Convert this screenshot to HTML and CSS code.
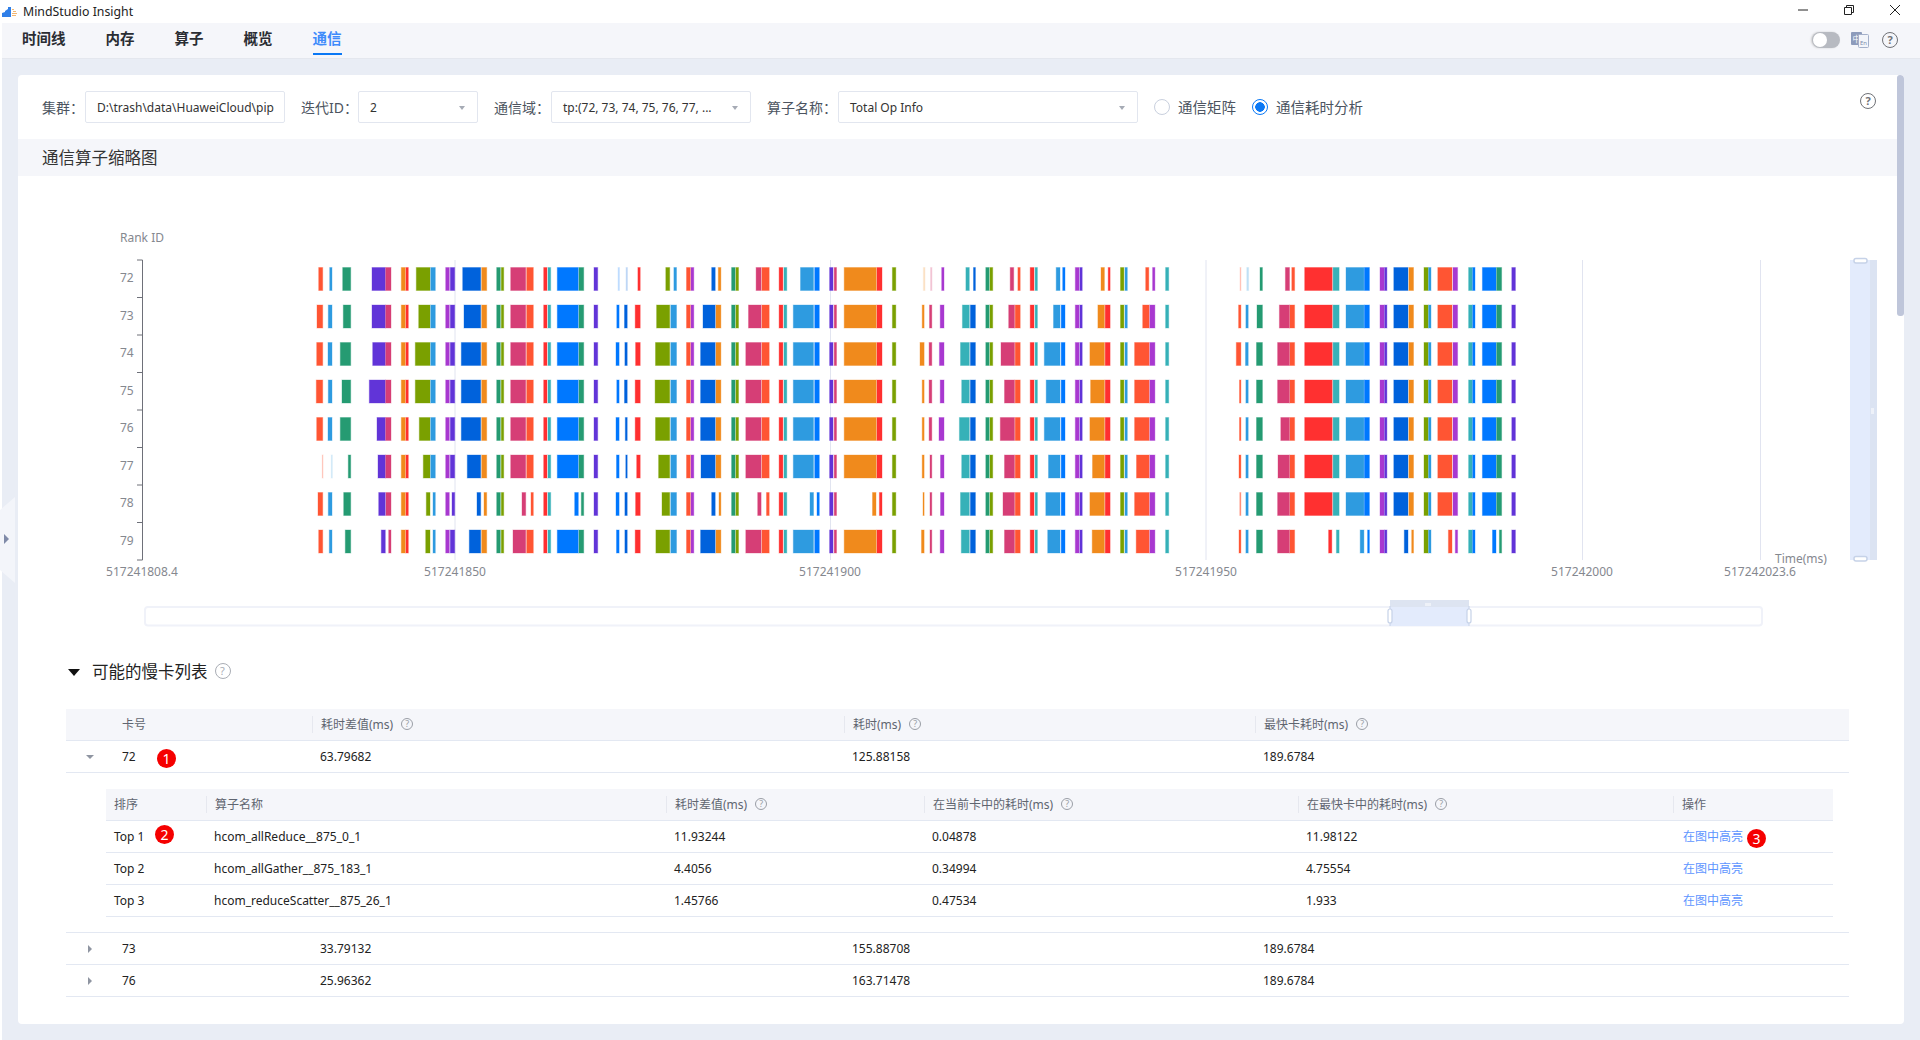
FILE: index.html
```html
<!DOCTYPE html>
<html lang="zh-CN">
<head>
<meta charset="utf-8">
<title>MindStudio Insight</title>
<link rel="stylesheet" href="styles.css">
</head>
<body>
<header class="titlebar">
  <svg class="logo" width="16" height="10" viewBox="0 0 16 10"><path d="M0 6 3 5V4L6 2V0L9 0V10H0Z" fill="#2f7fe8"/><path d="M10 2h2v1h-2ZM11 4h3v1h-3ZM10 6h5v1h-5ZM10 8h4v1h-4Z" fill="#f3b772"/></svg>
  <span class="apptitle">MindStudio Insight</span>
  <div class="winctrls">
    <svg width="12" height="12" viewBox="0 0 12 12"><path d="M1 6h10" stroke="#222" fill="none"/></svg>
    <svg width="12" height="12" viewBox="0 0 12 12"><path d="M3.500 3.500V1.500h7v7h-2M1.500 3.500h7v7h-7Z" stroke="#222" fill="none"/></svg>
    <svg width="12" height="12" viewBox="0 0 12 12"><path d="M1 1l10 10M11 1 1 11" stroke="#222" fill="none"/></svg>
  </div>
</header>
<nav class="tabbar">
  <div class="tabs">
    <a class="tab">时间线</a><a class="tab">内存</a><a class="tab">算子</a><a class="tab">概览</a><a class="tab active">通信</a>
  </div>
  <div class="tools">
    <span class="toggle"><i></i></span>
    <svg class="lang" width="18" height="16" viewBox="0 0 18 16"><rect width="11" height="13" rx="1" fill="#8d9bbb"/><text x="5.500" y="9.500" class="lang-a">中</text><rect x="7.500" y="2.500" width="10" height="13" rx="1" fill="#f3f5fa" stroke="#a4b0ca"/><text x="12.500" y="13" class="lang-b">En</text></svg>
    <span class="help">?</span>
  </div>
</nav>
<main class="main">
  <aside class="side-handle"></aside>
  <section class="card">
    <div class="scroll-thumb"></div>
    <div class="filters">
      <div class="field"><label class="l-cluster">集群：</label><div class="input w-cluster"><span class="clip">D:\trash\data\HuaweiCloud\pip</span></div></div>
      <div class="field"><label class="l-iter">迭代ID：</label><div class="input w-iter"><span class="clip">2</span><i class="caret"></i></div></div>
      <div class="field"><label class="l-domain">通信域：</label><div class="input w-domain"><span class="clip">tp:(72, 73, 74, 75, 76, 77, ...</span><i class="caret"></i></div></div>
      <div class="field"><label class="l-op">算子名称：</label><div class="input w-op"><span class="clip">Total Op Info</span><i class="caret"></i></div></div>
      <div class="radio"><i class="dot"></i><span>通信矩阵</span></div>
      <div class="radio on"><i class="dot"></i><span>通信耗时分析</span></div>
      <span class="help filter-help">?</span>
    </div>
    <h2 class="band">通信算子缩略图</h2>
    <svg id="chart" class="chart" width="1886" height="456" viewBox="18 176 1886 456">
      <g class="grid">
        <path d="M455 260V560M830.500 260V560M1206 260V560M1582.500 260V560M1760.500 260V560"/>
      </g>
      <g id="bars"></g>
      <path class="axis" d="M142.500 260V560M137 260h5.500M137 297.500h5.500M137 335h5.500M137 372.500h5.500M137 410h5.500M137 447.500h5.500M137 485h5.500M137 522.500h5.500M137 560h5.500"/>
      <g class="tick">
        <text x="120" y="242">Rank ID</text>
        <text x="120" y="282">72</text><text x="120" y="320">73</text><text x="120" y="357">74</text><text x="120" y="395">75</text>
        <text x="120" y="432">76</text><text x="120" y="470">77</text><text x="120" y="507">78</text><text x="120" y="545">79</text>
        <text x="1775" y="563">Time(ms)</text>
      </g>
      <g class="tick mid">
        <text x="142" y="576">517241808.4</text><text x="455" y="576">517241850</text><text x="830" y="576">517241900</text>
        <text x="1206" y="576">517241950</text><text x="1582" y="576">517242000</text><text x="1760" y="576">517242023.6</text>
      </g>
      <!-- vertical data zoom -->
      <rect x="1850" y="260" width="20" height="300" fill="#e3ebfc"/>
      <rect x="1870" y="260" width="7" height="300" fill="#dbe3f2"/>
      <rect x="1854" y="258.500" width="13" height="4.500" rx="2" fill="#fff" stroke="#c6d2e8" stroke-width="1.500"/>
      <rect x="1854" y="556.500" width="13" height="4.500" rx="2" fill="#fff" stroke="#c6d2e8" stroke-width="1.500"/>
      <path d="M1871 409h3M1871 411h3M1871 413h3" stroke="#fff"/>
      <!-- horizontal data zoom -->
      <rect x="145" y="607" width="1617" height="18.500" rx="3" fill="#fff" stroke="#f0f2f9" stroke-width="2"/>
      <rect x="1390" y="606" width="79" height="20" fill="#e3ebfc"/>
      <rect x="1390" y="600" width="79" height="7" fill="#dde4f1"/>
      <path d="M1426 603v3M1428 603v3M1430 603v3" stroke="#fff"/>
      <path d="M1390 606v20M1469 606v20" stroke="#c6d2e8"/>
      <rect x="1388" y="609" width="4" height="14" rx="2" fill="#fff" stroke="#c6d2e8" stroke-width="1.200"/>
      <rect x="1467" y="609" width="4" height="14" rx="2" fill="#fff" stroke="#c6d2e8" stroke-width="1.200"/>
    </svg>
    <div class="slow-head">
      <i class="tri"></i><h3>可能的慢卡列表</h3><span class="help soft">?</span>
    </div>
    <div class="table outer">
      <div class="row head">
        <div class="cell first">卡号</div>
        <div class="cell"><span>耗时差值(ms)</span><span class="help tiny">?</span></div>
        <div class="cell"><span>耗时(ms)</span><span class="help tiny">?</span></div>
        <div class="cell"><span>最快卡耗时(ms)</span><span class="help tiny">?</span></div>
      </div>
      <div class="row">
        <div class="cell first"><i class="arrow down"></i>72<b class="badge b1">1</b></div>
        <div class="cell">63.79682</div><div class="cell">125.88158</div><div class="cell">189.6784</div>
      </div>
      <div class="expand">
        <div class="table inner">
          <div class="irow head">
            <div class="cell nosep">排序</div><div class="cell">算子名称</div>
            <div class="cell"><span>耗时差值(ms)</span><span class="help tiny">?</span></div>
            <div class="cell"><span>在当前卡中的耗时(ms)</span><span class="help tiny">?</span></div>
            <div class="cell"><span>在最快卡中的耗时(ms)</span><span class="help tiny">?</span></div>
            <div class="cell">操作</div>
          </div>
          <div class="irow">
            <div class="cell">Top 1<b class="badge b2">2</b></div><div class="cell">hcom_allReduce__875_0_1</div><div class="cell">11.93244</div><div class="cell">0.04878</div><div class="cell">11.98122</div>
            <div class="cell"><a class="link">在图中高亮</a><b class="badge b3">3</b></div>
          </div>
          <div class="irow">
            <div class="cell">Top 2</div><div class="cell">hcom_allGather__875_183_1</div><div class="cell">4.4056</div><div class="cell">0.34994</div><div class="cell">4.75554</div>
            <div class="cell"><a class="link">在图中高亮</a></div>
          </div>
          <div class="irow">
            <div class="cell">Top 3</div><div class="cell">hcom_reduceScatter__875_26_1</div><div class="cell">1.45766</div><div class="cell">0.47534</div><div class="cell">1.933</div>
            <div class="cell"><a class="link">在图中高亮</a></div>
          </div>
        </div>
      </div>
      <div class="row">
        <div class="cell first"><i class="arrow"></i>73</div>
        <div class="cell">33.79132</div><div class="cell">155.88708</div><div class="cell">189.6784</div>
      </div>
      <div class="row">
        <div class="cell first"><i class="arrow"></i>76</div>
        <div class="cell">25.96362</div><div class="cell">163.71478</div><div class="cell">189.6784</div>
      </div>
    </div>
  </section>
</main>
<script src="chart.js"></script>
</body>
</html>
```
FILE: styles.css
```css
* { box-sizing: border-box; }
html, body { margin: 0; height: 1040px; overflow: hidden; }
body { background: #fff; color: #222; font-family: "Noto Sans", "Noto Sans CJK SC", sans-serif; font-size: 12px; }

.titlebar { height: 23px; display: flex; align-items: center; padding-left: 2px; background: #fff; }
.logo { margin-right: 5px; }
.apptitle { font-size: 12.300px; color: #222; margin-top: -1px; }
.winctrls { margin-left: auto; display: flex; gap: 34px; padding-right: 19px; margin-top: -3px; }

.tabbar { height: 36px; margin-left: 2px; background: #f5f6fa; border-bottom: 1px solid #e4e7ee; display: flex; align-items: flex-start; justify-content: space-between; }
.tabs { display: flex; gap: 40px; padding-left: 20px; }
.tab { height: 32px; line-height: 31px; font-size: 14.500px; font-weight: 700; color: #2a2d33; border-bottom: 2px solid transparent; }
.tab.active { color: #3f8bfa; border-bottom-color: #0a78f5; }
.tools { display: flex; align-items: center; height: 34px; padding-right: 22px; gap: 11px; }
.lang { margin-right: 2px; }
.toggle { width: 28px; height: 16px; border-radius: 8px; background: #b7bac1; display: block; padding: 1px; box-shadow: -1px 0 2px #ccc; }
.toggle i { display: block; width: 14px; height: 14px; border-radius: 50%; background: #fff; }

.help { display: inline-block; width: 16px; height: 16px; border: 1.500px solid #707277; border-radius: 50%; color: #707277; font-size: 11px; font-weight: 700; line-height: 13px; text-align: center; flex: none; }
.help.soft { border: 1px solid #a9adb5; color: #a9adb5; font-weight: 400; line-height: 14px; }
.help.tiny { width: 12px; height: 12px; border: 1px solid #9a9ea6; color: #9a9ea6; font-size: 9px; font-weight: 400; line-height: 10px; margin-left: 8px; }

.main { margin-left: 2px; height: 981px; background: #e9edf5; padding: 16px 0 0 16px; position: relative; }
.side-handle { position: absolute; left: -2px; top: 438px; width: 15px; height: 86px; background: #f3f5fa; clip-path: polygon(100% 0, 100% 100%, 0 85%, 0 15%); }
.side-handle::after { content: ""; position: absolute; left: 4px; top: 37px; border-left: 5px solid #7f8aa8; border-top: 5.500px solid transparent; border-bottom: 5.500px solid transparent; }
.card { width: 1886px; height: 949px; background: #fff; border-radius: 4px; position: relative; overflow: hidden; }
.scroll-thumb { position: absolute; right: 0; top: 0; width: 7px; height: 241px; border-radius: 3px; background: #bfc6da; }

.filters { height: 64px; display: flex; align-items: center; padding-left: 24px; gap: 16px; position: relative; }
.field { display: flex; align-items: center; }
.field label { font-size: 14px; color: #4c5460; white-space: nowrap; margin-top: -1px; }
.l-cluster { width: 43px; } .l-iter { width: 57px; } .l-domain { width: 57px; } .l-op { width: 71px; }
.input { height: 32px; border: 1px solid #e2e6ef; border-radius: 2px; display: flex; align-items: center; padding: 0 8px 0 11px; color: #333; position: relative; background: #fff; }
.w-cluster { width: 200px; } .w-iter { width: 120px; } .w-domain { width: 200px; } .w-op { width: 300px; }
.clip { white-space: nowrap; flex: 1; }
.caret { position: absolute; right: 12px; top: 14px; border-top: 4px solid #a6abb5; border-left: 3.500px solid transparent; border-right: 3.500px solid transparent; }
.radio { display: flex; align-items: center; gap: 8px; font-size: 14.500px; color: #4c5460; white-space: nowrap; }
.radio span { margin-top: -2px; }
.radio .dot { width: 16px; height: 16px; border: 1px solid #c9d0de; border-radius: 50%; background: #fff; }
.radio.on .dot { border: 1.500px solid #0a78f5; background: radial-gradient(circle, #0a78f5 0 4.500px, #fff 5px); }
.filter-help { position: absolute; right: 28px; top: 18px; }

.band { margin: 0; height: 37px; line-height: 38px; padding-left: 24px; background: #f5f6fa; font-size: 16.500px; font-weight: 400; color: #333; }
.chart { display: block; }
.grid path { stroke: #e1e4f0; fill: none; }
.axis { stroke: #6e7079; fill: none; }
.tick text { font-size: 12px; fill: #85888f; font-family: "Noto Sans", sans-serif; }
.tick.mid text { text-anchor: middle; }
.lang-a { font-size: 8px; fill: #fff; text-anchor: middle; font-family: "Noto Sans CJK SC", sans-serif; }
.lang-b { font-size: 6px; fill: #7d8bab; text-anchor: middle; font-family: "Noto Sans", sans-serif; }

.slow-head { height: 77px; display: flex; align-items: center; padding: 1px 0 0 50px; }
.tri { border-top: 7px solid #111; border-left: 6px solid transparent; border-right: 6px solid transparent; margin: 2px 12px 0 0; }
.slow-head h3 { margin: 0; font-size: 16.500px; font-weight: 400; color: #222; }
.slow-head .help { margin-left: 7px; }

.table.outer { margin-left: 48px; width: 1783px; }
.row { display: grid; grid-template-columns: 246px 532px 411px 1fr; height: 32px; border-bottom: 1px solid #e3e8f2; }
.irow { display: grid; grid-template-columns: 100px 460px 258px 374px 375px 1fr; height: 32px; border-bottom: 1px solid #e3e8f2; }
.head { background: #f5f6fa; color: #5f6570; }
.cell { display: flex; align-items: center; padding-left: 8px; white-space: nowrap; position: relative; padding-bottom: 1px; }
.head .cell { padding-left: 0; }
.head .cell::before { content: ""; width: 1px; height: 17px; background: #e6e8ef; margin-right: 8px; }
.head .cell.first::before, .head .cell.nosep::before { display: none; }
.head .cell.nosep { padding-left: 8px; }
.row .cell.first { padding-left: 56px; position: relative; }
.arrow { position: absolute; left: 22px; top: 12px; border-left: 4px solid #8f95a1; border-top: 4px solid transparent; border-bottom: 4px solid transparent; }
.arrow.down { left: 20px; top: 14px; border-left: 4px solid transparent; border-right: 4px solid transparent; border-top: 4.500px solid #8f95a1; border-bottom: 0; }
.expand { padding: 16px 16px 15px 40px; border-bottom: 1px solid #e3e8f2; }
.link { color: #5d95ff; padding-left: 2px; }
.badge { position: absolute; width: 19px; height: 19px; border-radius: 50%; background: #f50000; color: #fff; font-size: 14px; font-weight: 400; line-height: 19px; text-align: center; }
.b1 { left: 91px; top: 8px; }
.b2 { left: 49px; top: 4px; }
.b3 { left: 74px; top: 8px; }
```
FILE: chart.js
```js
// Each column: colour, x0, x1, optional per-row overrides {row: x0 or [x0,x1,opacity]}
var C = { coral:'#ff5533', sky:'#2e9be0', green:'#259b72', purple:'#6134d8', pink:'#d63e76', orange:'#f08a1c', red:'#ff3030', olive:'#7aa000', violet:'#a838d0', dk:'#0062dc', teal:'#36b1b8', blue:'#0078ff' };
var cols = [
 ['coral',316.7,322.7,{0:318.7,1:317,3:316.3,5:[322.3,323,.4],6:318,7:318.7}],
 ['sky',328.3,332,{0:329.7,2:328,4:328,5:[331.3,332.3,.25],7:329.3}],
 ['green',342,350.7,{0:342.7,1:343.3,2:340.3,4:340.3,5:348.3,6:343.7,7:345.3}],
 ['purple',372,385.3,{2:372.7,3:369.3,4:377,5:378,6:378.7,7:381.3}],
 ['pink',385.7,391,{6:386,7:388.7}],
 ['orange',401.3,405.3],['red',406,408.3],
 ['olive',416.3,430,{1:418.7,2:415.3,3:415.3,4:419.3,5:423.3,6:426.3,7:425.7}],
 ['sky',430.7,435.3,{6:433,7:433}],
 ['violet',445.7,449.3],['purple',450.3,454.7,{6:452}],
 ['dk',462.7,480.7,{1:464,2:461.3,3:461.3,4:461.3,5:467.3,6:477,7:469.3}],
 ['orange',481.7,486.7,{6:484}],
 ['green',496.7,500.3],['olive',501.3,503.7],
 ['pink',510.7,525.7,{6:522,7:513}],
 ['coral',526.7,533.3,{6:531}],
 ['red',543.7,547],['teal',548,550.7],
 ['blue',557.3,578.3,{6:574.7}],
 ['green',579,583.7,{6:581.3}],
 ['purple',594,597.7],
 ['blue',616.8,619.1,{0:[618,619.5,.25],2:616,4:616,5:616.5,6:616,7:616.5}],
 ['dk',624.5,627.2,{0:[626,627.5,.25],2:624.9,4:625.3,5:625.8,6:624.9,7:624.9}],
 ['red',635.2,640.2,{0:637.9,2:635.6,5:636.7,6:635.6}],
 ['olive',655.5,669.7,{0:665.8,1:656.6,3:655.1,5:658.6,6:662,7:655.9}],
 ['sky',670.8,676.5,{0:673.9}],
 ['coral',686.5,690.3],['violet',691,693.8],
 ['dk',700.6,715.2,{0:711.7,1:703,5:701,6:711.7}],
 ['orange',716,720.9,{0:718.3,6:719}],
 ['green',731.6,735.1],['olive',735.9,738.5],
 ['pink',745.8,761.1,{0:756.1,1:748.5,6:757.7}],
 ['coral',761.9,769.2,{6:766.5}],
 ['red',779.1,782.9],['teal',784,786.8],
 ['sky',793.3,813.5,{0:800.5,6:810}],
 ['blue',814.7,819.3,{6:817}],
 ['purple',829.6,833],['pink',834.2,836.5],
 ['orange',844.2,876.3,{6:[872.5,876]}],
 ['red',877,882,{6:879.4}],
 ['olive',892.4,895.8],
 ['orange',922.2,924.1,{0:[923.4,925,.25],2:920,6:923,7:921.5}],
 ['pink',929.1,931.8,{0:[930.5,932,.3],1:929.5,5:930,6:930,7:930}],
 ['violet',940.2,944,{0:941.7,2:939.4,4:939,5:940.5,6:940.5}],
 ['teal',961.7,969.3,{0:965.9,1:962.4,2:960.5,4:959.4,6:960.5,7:961.3}],
 ['dk',970.4,975.4,{0:973.5}],
 ['green',985.8,989.2],['olive',990,992.7],
 ['pink',1004.5,1014.5,{0:[1010.2,1013.7],1:1008.7,2:1001,4:1000.3,6:1003}],
 ['coral',1015.2,1020.2,{0:1017.9}],
 ['red',1030.2,1034],['teal',1035.1,1037.4],
 ['sky',1046.2,1060,{0:1056.2,1:1053.5,2:1044.3,4:1044.3,5:1048.5,6:1045.8,7:1047.7}],
 ['blue',1061.2,1065,{0:1062.7}],
 ['violet',1075.3,1079.1],['purple',1079.9,1082.2],
 ['orange',1090.6,1104.4,{0:1101,1:1097.9,2:1089.9,4:1089.9,5:1092.5,6:1089.9,7:1092.2}],
 ['red',1105.2,1110.1,{0:1108.2}],
 ['olive',1120.5,1123.9],['sky',1125,1127.3],
 ['coral',1134.6,1149.2,{0:[1145.7,1148.8],1:1142.7,5:1136.5,7:1136.2}],
 ['violet',1149.9,1154.9,{0:1152.6}],
 ['teal',1165.6,1168.7],
 ['coral',1239.5,1240.9,{0:[1240,1241,.35],1:1238.6,2:1236.3,5:1239,6:[1239.8,1240.9,.7],7:1239}],
 ['sky',1245.9,1248.2,{0:[1246.8,1248.6,.3],2:1245.5}],
 ['green',1256.5,1262.4,{0:1260,1:1257}],
 ['pink',1277.6,1289.5,{0:1285.4,1:1279.4,4:1280.8,5:1278}],
 ['coral',1290,1294.6,{0:1291.8}],
 ['red',1304.7,1332.2,{7:[1328.6,1331.8]}],
 ['teal',1333.1,1339.1,{7:1336.4}],
 ['sky',1346,1363.9,{7:1360.2}],
 ['blue',1364.4,1369.4,{7:1367.6}],
 ['violet',1380,1384.1],['purple',1384.6,1386.9],
 ['dk',1393.8,1408,{7:1404.3}],
 ['orange',1408.9,1413.5,{7:1411.7}],
 ['olive',1424,1428.2],['sky',1428.6,1431],
 ['coral',1437.8,1452,{7:1448.4}],
 ['violet',1453,1457.6,{7:1455.3}],
 ['teal',1468.6,1472.3],['blue',1472.7,1475],
 ['blue',1482.4,1496,{7:1492.5}],
 ['green',1496.6,1501.6,{7:1499.4}],
 ['purple',1511.8,1515.4]
];
var tops = [267.5,305,342.5,380,417.5,455,492.5,530];
var NS = 'http://www.w3.org/2000/svg';
var g = document.getElementById('bars');
tops.forEach(function (y, r) {
  cols.forEach(function (c) {
    var x0 = c[1], x1 = c[2], op = 1, o = c[3] && c[3][r];
    if (typeof o === 'number') x0 = o;
    else if (o) { x0 = o[0]; x1 = o[1]; if (o[2]) op = o[2]; }
    var rect = document.createElementNS(NS, 'rect');
    rect.setAttribute('x', x0);
    rect.setAttribute('y', y);
    rect.setAttribute('width', x1 - x0);
    rect.setAttribute('height', 23);
    rect.setAttribute('fill', C[c[0]]);
    rect.setAttribute('stroke', C[c[0]]);
    rect.setAttribute('stroke-opacity', '.35');
    rect.setAttribute('stroke-width', '1');
    rect.setAttribute('opacity', op);
    g.appendChild(rect);
  });
});
```
